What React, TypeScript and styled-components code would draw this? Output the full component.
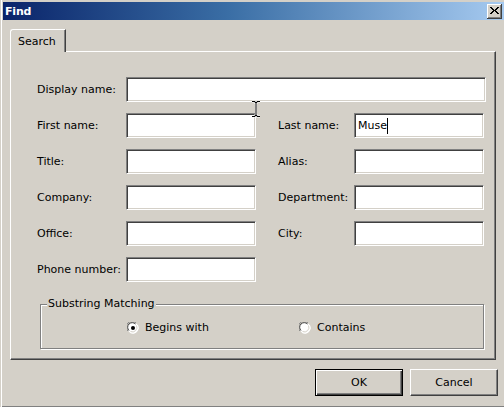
import React from "react";
import styled, { createGlobalStyle } from "styled-components";

const Global = createGlobalStyle`
  html, body { margin: 0; padding: 0; background: #d4d0c8; }
  body { width: 504px; height: 407px; overflow: hidden; }
  * { box-sizing: border-box; }
`;

const FONT = `"DejaVu Sans", Tahoma, sans-serif`;

const Window = styled.div`
  position: relative;
  width: 504px;
  height: 407px;
  background: #d4d0c8;
  padding: 2px 0 0 2px;
  border-left: 1px solid #d4d0c8;
  box-shadow: inset 1px 0 0 #ffffff, inset 0 -1px 0 #808080;
  font-family: ${FONT};
  font-size: 11px;
  color: #000;
  display: flex;
  flex-direction: column;
`;

const TitleBar = styled.div`
  height: 18px;
  display: flex;
  align-items: center;
  justify-content: space-between;
  padding: 0 2px 0 2px;
  background: linear-gradient(to right, #0a246a 0%, #3a6ea5 45%, #a6caf0 100%);
`;

const Title = styled.span`
  color: #fff;
  font-weight: bold;
  font-size: 11px;
  font-family: ${FONT};
  letter-spacing: -0.2px;
`;

const CloseBtn = styled.div`
  width: 15px;
  height: 15px;
  margin-top: 1px;
  background: #d4d0c8;
  box-shadow: inset -1px -1px 0 #404040, inset 1px 1px 0 #ffffff, inset -2px -2px 0 #808080;
  display: flex;
  align-items: center;
  justify-content: center;
  padding: 0 1px 1px 0;
`;

const Body = styled.div`
  padding: 9px 0 0 7px;
  display: flex;
  flex-direction: column;
`;

const TabStrip = styled.div`
  display: flex;
  height: 22px;
`;

const Tab = styled.div`
  width: 56px;
  height: 23px;
  padding: 5px 0 0 7px;
  background: #d4d0c8;
  border-top: 1px solid #fff;
  border-left: 1px solid #fff;
  border-top-left-radius: 3px;
  border-right: 1px solid #404040;
  box-shadow: inset -1px 0 0 #808080;
  position: relative;
  z-index: 1;
`;

const Panel = styled.div`
  width: 486px;
  height: 309px;
  border-top: 1px solid #fff;
  border-left: 1px solid #fff;
  border-right: 1px solid #404040;
  border-bottom: 1px solid #404040;
  box-shadow: inset -1px -1px 0 #808080;
  padding: 25px 0 0 26px;
  display: flex;
  flex-direction: column;
`;

const Fields = styled.div`
  display: grid;
  grid-template-columns: 89px 130px 22px 76px 130px;
  grid-auto-rows: 25px;
  row-gap: 11px;
  align-items: center;
`;

const Label = styled.span<{ $col: number }>`
  grid-column: ${(p) => p.$col};
  white-space: nowrap;
  align-self: center;
`;

const Input = styled.div<{ $wide?: boolean }>`
  grid-column: ${(p) => (p.$wide ? "2 / 6" : "auto")};
  width: ${(p) => (p.$wide ? "360px" : "130px")};
  height: 25px;
  background: #fff;
  border-top: 1px solid #808080;
  border-left: 1px solid #808080;
  border-right: 1px solid #fff;
  border-bottom: 1px solid #fff;
  box-shadow: inset 1px 1px 0 #404040, inset -1px -1px 0 #d4d0c8;
  padding: 0 0 0 3px;
  display: flex;
  align-items: center;
  font-size: 11px;
  position: relative;
`;

const Caret = styled.span`
  display: inline-block;
  width: 1px;
  height: 16px;
  background: #000;
  margin-left: 0px;
`;

const Spacer = styled.span<{ $col: string }>`
  grid-column: ${(p) => p.$col};
`;

const Group = styled.div`
  position: relative;
  margin: 22px 0 0 3px;
  width: 444px;
  height: 45px;
  border: 1px solid #808080;
  box-shadow: inset 1px 1px 0 #fff, 1px 1px 0 #fff;
  display: flex;
  align-items: center;
  padding: 2px 0 0 86px;
`;

const Legend = styled.span`
  position: absolute;
  left: 6px;
  top: -8px;
  padding: 0 1px 0 1px;
  background: #d4d0c8;
  line-height: 14px;
`;

const RadioItem = styled.label<{ $width: number }>`
  display: flex;
  align-items: center;
  gap: 6px;
  width: ${(p) => p.$width}px;
`;

const Footer = styled.div`
  display: flex;
  justify-content: flex-end;
  gap: 7px;
  padding: 9px 6px 0 0;
`;

const Button = styled.div<{ $default?: boolean }>`
  width: 88px;
  height: 27px;
  display: flex;
  align-items: center;
  justify-content: center;
  background: #d4d0c8;
  border: 1px solid ${(p) => (p.$default ? "#000" : "transparent")};
  box-shadow: ${(p) =>
    p.$default
      ? "inset 1px 1px 0 #fff, inset -1px -1px 0 #404040, inset -2px -2px 0 #808080"
      : "inset 0 0 0 0 transparent"};
  ${(p) =>
    !p.$default &&
    `border-top-color:#fff;border-left-color:#fff;border-right-color:#404040;border-bottom-color:#404040;box-shadow: inset -1px -1px 0 #808080;`}
  padding-bottom: 1px;
`;

const CursorWrap = styled.div`
  position: absolute;
  left: 250px;
  top: 100px;
  width: 10px;
  height: 18px;
  pointer-events: none;
`;

const Radio = ({ checked }: { checked?: boolean }) => (
  <svg width="12" height="12" viewBox="0 0 12 12">
    <circle cx="6" cy="6" r="5.5" fill="#fff" />
    <path d="M1 9 A5.5 5.5 0 0 1 9 1" stroke="#808080" strokeWidth="1" fill="none" />
    <path d="M2 8.5 A4.5 4.5 0 0 1 8.5 2" stroke="#404040" strokeWidth="1" fill="none" />
    <path d="M10.5 3 A5.5 5.5 0 0 1 3 10.5" stroke="#fff" strokeWidth="1" fill="none" />
    <path d="M9.5 3.5 A4.5 4.5 0 0 1 3.5 9.5" stroke="#d4d0c8" strokeWidth="1" fill="none" />
    {checked && <circle cx="6" cy="6" r="2" fill="#000" />}
  </svg>
);

const rows: [string, string | null][] = [
  ["First name:", "Last name:"],
  ["Title:", "Alias:"],
  ["Company:", "Department:"],
  ["Office:", "City:"],
  ["Phone number:", null],
];

export default function App() {
  return (
    <>
      <Global />
      <Window>
        <TitleBar>
          <Title>Find</Title>
          <CloseBtn>
            <svg width="9" height="8" viewBox="0 0 9 8" shapeRendering="crispEdges">
              <path d="M0 0h2v1h1v1h1v1h1v-1h1v-1h1v-1h2v1h-1v1h-1v1h-1v1h1v1h1v1h1v1h-2v-1h-1v-1h-1v-1h-1v1h-1v1h-1v1h-2v-1h1v-1h1v-1h1v-1h-1v-1h-1v-1h-1z" fill="#000" />
            </svg>
          </CloseBtn>
        </TitleBar>
        <Body>
          <TabStrip>
            <Tab>Search</Tab>
          </TabStrip>
          <Panel>
            <Fields>
              <Label $col={1}>Display name:</Label>
              <Input $wide />
              {rows.map(([a, b], i) => (
                <React.Fragment key={i}>
                  <Label $col={1}>{a}</Label>
                  <Input />
                  {b ? (
                    <>
                      <Label $col={4}>{b}</Label>
                      <Input>
                        {b === "Last name:" && (
                          <>
                            Muse<Caret />
                          </>
                        )}
                      </Input>
                    </>
                  ) : (
                    <Spacer $col="4 / 6" />
                  )}
                </React.Fragment>
              ))}
            </Fields>
            <Group>
              <Legend>Substring Matching</Legend>
              <RadioItem $width={172}>
                <Radio checked />
                Begins with
              </RadioItem>
              <RadioItem $width={120}>
                <Radio />
                Contains
              </RadioItem>
            </Group>
          </Panel>
          <Footer>
            <Button $default>OK</Button>
            <Button>Cancel</Button>
          </Footer>
        </Body>
        <CursorWrap>
          <svg width="10" height="18" viewBox="0 0 10 18">
            <path d="M1 1.5h3v1h2v-1h3M5 2.5v13M1 16.5h3v-1h2v1h3" stroke="#fff" strokeWidth="2" fill="none" />
            <path d="M1 1.5h3v1h2v-1h3M5 2.5v13M1 16.5h3v-1h2v1h3" stroke="#000" strokeWidth="1" fill="none" />
          </svg>
        </CursorWrap>
      </Window>
    </>
  );
}
